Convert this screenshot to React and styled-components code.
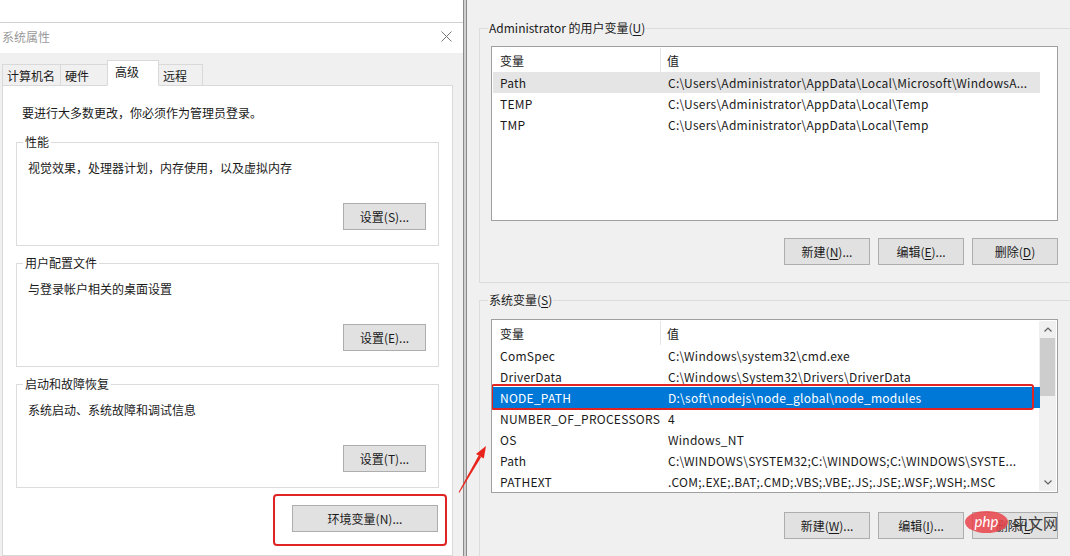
import React from 'react';
import styled, { createGlobalStyle } from 'styled-components';

const userVars = [
    { name: 'Path', value: 'C:\\Users\\Administrator\\AppData\\Local\\Microsoft\\WindowsA...', sel: 'gray' },
    { name: 'TEMP', value: 'C:\\Users\\Administrator\\AppData\\Local\\Temp' },
    { name: 'TMP', value: 'C:\\Users\\Administrator\\AppData\\Local\\Temp' },
];

const systemVars = [
    { name: 'ComSpec', value: 'C:\\Windows\\system32\\cmd.exe' },
    { name: 'DriverData', value: 'C:\\Windows\\System32\\Drivers\\DriverData' },
    { name: 'NODE_PATH', value: 'D:\\soft\\nodejs\\node_global\\node_modules', sel: 'blue', marked: true },
    { name: 'NUMBER_OF_PROCESSORS', value: '4' },
    { name: 'OS', value: 'Windows_NT' },
    { name: 'Path', value: 'C:\\WINDOWS\\SYSTEM32;C:\\WINDOWS;C:\\WINDOWS\\SYSTE...' },
    { name: 'PATHEXT', value: '.COM;.EXE;.BAT;.CMD;.VBS;.VBE;.JS;.JSE;.WSF;.WSH;.MSC' },
];

const groups = [
    { title: '性能', desc: '视觉效果，处理器计划，内存使用，以及虚拟内存', button: '设置(S)...' },
    { title: '用户配置文件', desc: '与登录帐户相关的桌面设置', button: '设置(E)...' },
    { title: '启动和故障恢复', desc: '系统启动、系统故障和调试信息', button: '设置(T)...' },
];

const tabs = [
    { label: '计算机名', w: 59 },
    { label: '硬件', w: 48 },
    { label: '高级', w: 52, active: true },
    { label: '远程', w: 45 },
];

const Chevron = ({ up }) => (
    <svg width="8" height="5" viewBox="0 0 8 5">
        <polyline
            points={up ? '0.5,4.5 4,1 7.5,4.5' : '0.5,0.5 4,4 7.5,0.5'}
            fill="none"
            stroke="#606060"
            strokeWidth="1.2"
        />
    </svg>
);

const VarList = ({ rows, height, scroll }) => (
    <ListBox $h={height}>
        <ListBody>
            <HeaderRow>
                <HeaderCell $sep>变量</HeaderCell>
                <HeaderCell>值</HeaderCell>
            </HeaderRow>
            {rows.map((r) => (
                <VarRow key={r.name + r.value} $sel={r.sel} $marked={r.marked}>
                    <Cell>{r.name}</Cell>
                    <Cell>{r.value}</Cell>
                </VarRow>
            ))}
        </ListBody>
        {scroll && (
            <Scrollbar>
                <ScrollArrow><Chevron up /></ScrollArrow>
                <Thumb />
                <Track />
                <ScrollArrow><Chevron /></ScrollArrow>
            </Scrollbar>
        )}
    </ListBox>
);

const App = () => {
    return (
        <Page>
            <GlobalStyle />
            <LeftPane>
                <Dialog>
                    <TitleBar>
                        <span>系统属性</span>
                        <svg width="11" height="11" viewBox="0 0 11 11">
                            <path d="M0.5 0.5 L10.5 10.5 M10.5 0.5 L0.5 10.5" stroke="#777" strokeWidth="1" />
                        </svg>
                    </TitleBar>
                    <DialogBody>
                        <TabStrip>
                            {tabs.map((t) => (
                                <Tab key={t.label} $w={t.w} $active={t.active}>{t.label}</Tab>
                            ))}
                        </TabStrip>
                        <TabPanel>
                            <Intro>要进行大多数更改，你必须作为管理员登录。</Intro>
                            {groups.map((g) => (
                                <GroupBox key={g.title}>
                                    <Legend>{g.title}</Legend>
                                    <Desc>{g.desc}</Desc>
                                    <ButtonRow>
                                        <Button $w={83}>{g.button}</Button>
                                    </ButtonRow>
                                </GroupBox>
                            ))}
                            <EnvRow>
                                <RedFrame>
                                    <Button $w={146}>环境变量(N)...</Button>
                                </RedFrame>
                            </EnvRow>
                        </TabPanel>
                    </DialogBody>
                </Dialog>
            </LeftPane>

            <Divider />

            <RightPane>
                <WideGroup>
                    <Legend $wide>Administrator 的用户变量(<u>U</u>)</Legend>
                    <VarList rows={userVars} height={175} />
                    <ButtonRow $gap={8} $top={17}>
                        <Button $w={86}>新建(<u>N</u>)...</Button>
                        <Button $w={86}>编辑(<u>E</u>)...</Button>
                        <Button $w={86}>删除(<u>D</u>)</Button>
                    </ButtonRow>
                </WideGroup>
                <WideGroup $sys>
                    <Legend $wide>系统变量(<u>S</u>)</Legend>
                    <VarList rows={systemVars} height={174} scroll />
                    <ButtonRow $gap={8} $top={19}>
                        <Button $w={86}>新建(<u>W</u>)...</Button>
                        <Button $w={86}>编辑(<u>I</u>)...</Button>
                        <Button $w={86}>删除(<u>L</u>)</Button>
                        <Watermark>
                            <PhpBadge>php</PhpBadge>
                            <span>中文网</span>
                        </Watermark>
                    </ButtonRow>
                </WideGroup>
            </RightPane>

            <Arrow width="40" height="60" viewBox="0 0 40 60">
                <polygon points="6.6,52.2 7.4,52.7 29.2,16.9 26.6,15.6" fill="#e8231b" />
                <polygon points="34,6 31.8,18.6 24,14" fill="#e8231b" />
            </Arrow>
        </Page>
    );
}

export default App;

const GlobalStyle = createGlobalStyle`
    html, body {
        margin: 0;
        padding: 0;
        background: #fff;
    }
    body {
        font-family: "Noto Sans CJK SC", "Noto Sans", sans-serif;
        font-size: 12px;
        color: #1a1a1a;
    }
    #root {
        width: 1070px;
        height: 556px;
        overflow: hidden;
    }
`;

const Page = styled.div`
    position: relative;
    display: flex;
    width: 1070px;
    height: 556px;
    overflow: hidden;
`;

const LeftPane = styled.div`
    width: 463px;
    flex-shrink: 0;
    display: flex;
    flex-direction: column;
    padding-top: 22px;
    box-sizing: border-box;
    background: #fff;
`;

const Dialog = styled.div`
    flex: 1;
    display: flex;
    flex-direction: column;
    border-top: 1px solid #d0d0d0;
    min-height: 0;
`;

const TitleBar = styled.div`
    height: 30px;
    box-sizing: border-box;
    flex-shrink: 0;
    display: flex;
    align-items: center;
    justify-content: space-between;
    padding: 0 11px 3px 2px;
    color: #9a9a9a;
    background: #fff;
`;

const DialogBody = styled.div`
    flex: 1;
    display: flex;
    flex-direction: column;
    padding: 8px 10px 0 2px;
    background: #f0f0f0;
`;

const TabStrip = styled.div`
    display: flex;
    align-items: flex-end;
    height: 25px;
    margin-bottom: -1px;
    position: relative;
    z-index: 1;
`;

const Tab = styled.div`
    width: ${p => p.$w}px;
    height: ${p => (p.$active ? 26 : 22)}px;
    box-sizing: border-box;
    display: flex;
    align-items: center;
    padding: 0 0 ${p => (p.$active ? 3 : 0)}px ${p => (p.$active ? 7 : 4)}px;
    margin-right: -1px;
    border: 1px solid #d9d9d9;
    border-bottom-color: ${p => (p.$active ? '#fff' : '#d9d9d9')};
    background: ${p => (p.$active ? '#fff' : '#f0f0f0')};
    position: relative;
    z-index: ${p => (p.$active ? 2 : 1)};
`;

const TabPanel = styled.div`
    flex: 1;
    background: #fff;
    border: 1px solid #d9d9d9;
    padding: 19px 13px 0 13px;
`;

const Intro = styled.div`
    line-height: 16px;
    padding-left: 6px;
    margin-bottom: 13px;
`;

const GroupBox = styled.fieldset`
    margin: 0 0 9px;
    padding: 10px 12px 15px 11px;
    border: 1px solid #dcdcdc;
    min-width: 0;
`;

const Legend = styled.legend`
    padding: 0 ${p => (p.$wide ? 1 : 2)}px;
    margin-left: ${p => (p.$wide ? -3 : -5)}px;
    line-height: 16px;
    font-size: 12px;

    u {
        text-decoration: underline;
        text-underline-offset: 2px;
    }
`;

const Desc = styled.div`
    line-height: 16px;
`;

const ButtonRow = styled.div`
    position: relative;
    display: flex;
    justify-content: flex-end;
    gap: ${p => p.$gap || 0}px;
    margin-top: ${p => p.$top || 27}px;
`;

const Button = styled.button`
    width: ${p => p.$w}px;
    height: 27px;
    padding: 0;
    box-sizing: border-box;
    background: #e1e1e1;
    border: 1px solid #adadad;
    border-radius: 0;
    font-family: inherit;
    font-size: 12px;
    color: #1a1a1a;

    u {
        text-underline-offset: 2px;
    }
`;

const EnvRow = styled.div`
    display: flex;
    justify-content: flex-end;
    margin: -3px -8px 0 0;
`;

const RedFrame = styled.div`
    border: 2px solid #e02424;
    border-radius: 4px;
    padding: 9px 7px 12px 17px;
`;

const Divider = styled.div`
    width: 4px;
    flex-shrink: 0;
    box-sizing: border-box;
    background: #cfcfcf;
    border-left: 1px solid #8c8c8c;
    border-right: 1px solid #8c8c8c;
`;

const RightPane = styled.div`
    flex: 1;
    min-width: 0;
    overflow: hidden;
    background: #f0f0f0;
    padding: 20px 0 0 12px;
`;

const WideGroup = styled.fieldset`
    width: 593px;
    box-sizing: border-box;
    margin: 0 0 ${p => (p.$sys ? 0 : 9)}px;
    padding: ${p => (p.$sys ? 11 : 10)}px 13px 17px 11px;
    border: 1px solid #dcdcdc;
    min-width: 0;
`;

const ListBox = styled.div`
    height: ${p => p.$h}px;
    box-sizing: border-box;
    display: flex;
    padding: 1px;
    background: #fff;
    border: 1px solid #a0a0a0;
    overflow: hidden;
`;

const ListBody = styled.div`
    flex: 1;
    min-width: 0;
`;

const HeaderRow = styled.div`
    display: grid;
    grid-template-columns: 168px 1fr;
    width: 547px;
    height: 24px;
`;

const HeaderCell = styled.div`
    display: flex;
    align-items: center;
    padding-left: ${p => (p.$sep ? 7 : 6)}px;
    border-right: ${p => (p.$sep ? '1px solid #e5e5e5' : 'none')};
`;

const VarRow = styled.div`
    position: relative;
    display: grid;
    grid-template-columns: 168px 1fr;
    width: 547px;
    height: 21px;
    background: ${p => (p.$sel === 'blue' ? '#0078d7' : p.$sel === 'gray' ? '#e5e5e5' : 'transparent')};
    color: ${p => (p.$sel === 'blue' ? '#fff' : 'inherit')};

    &::after {
        content: '';
        display: ${p => (p.$marked ? 'block' : 'none')};
        position: absolute;
        left: -2px;
        right: 6px;
        top: -3px;
        bottom: -2px;
        border: 2px solid #e02424;
        border-radius: 3px;
    }
`;

const Cell = styled.div`
    display: flex;
    align-items: center;
    padding-left: 7px;
    letter-spacing: 0.25px;
    white-space: nowrap;
    overflow: hidden;
`;

const Scrollbar = styled.div`
    width: 17px;
    display: flex;
    flex-direction: column;
    background: #f0f0f0;
`;

const ScrollArrow = styled.div`
    height: 17px;
    display: flex;
    align-items: center;
    justify-content: center;
`;

const Thumb = styled.div`
    height: 58px;
    margin: 0 1px;
    background: #cdcdcd;
`;

const Track = styled.div`
    flex: 1;
`;

const Watermark = styled.div`
    position: absolute;
    right: 0;
    top: -2px;
    display: flex;
    align-items: center;
    gap: 5px;
    height: 24px;
    font-size: 15px;
    color: #3a3a3a;
    pointer-events: none;
`;

const PhpBadge = styled.div`
    width: 43px;
    height: 22px;
    border-radius: 50%;
    background: rgba(232, 67, 74, 0.85);
    color: #fff;
    font-family: "Lato", sans-serif;
    font-style: italic;
    font-size: 15px;
    line-height: 21px;
    text-align: center;
`;

const Arrow = styled.svg`
    position: absolute;
    left: 452px;
    top: 440px;
`;
